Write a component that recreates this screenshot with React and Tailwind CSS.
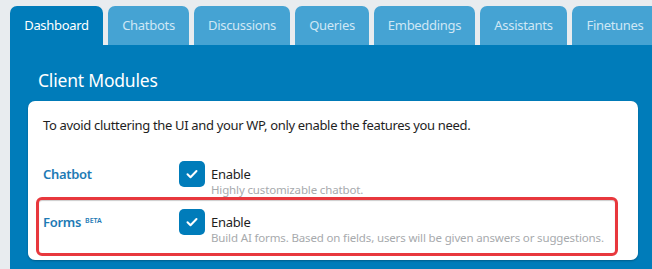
import React from 'react';

const tabs = [
  { label: 'Dashboard', w: 'w-[93px]' },
  { label: 'Chatbots', w: 'w-[81px]' },
  { label: 'Discussions', w: 'w-[96px]' },
  { label: 'Queries', w: 'w-[74px]' },
  { label: 'Embeddings', w: 'w-[101px]' },
  { label: 'Assistants', w: 'w-[87px]' },
  { label: 'Finetunes', w: 'w-[86px]' },
];

const CheckBox = () => (
  <div className="w-[26px] h-[26px] rounded-[5px] bg-[#007cba] flex items-center justify-center shrink-0">
    <svg width="14" height="14" viewBox="0 0 14 14" fill="none">
      <path d="M2.5 7.3l3 3 6-6.3" stroke="#fff" strokeWidth="2" strokeLinecap="round" strokeLinejoin="round" />
    </svg>
  </div>
);

const ModuleRow = ({ label, beta, description }) => (
  <div className="flex items-start">
    <div className="w-[136px] pt-[5px] text-[13px] font-semibold text-[#1d7ab5] leading-[16px] tracking-[-0.3px]">
      {label}
      {beta && (
        <span className="inline-block align-top ml-[4px] mt-[3px] text-[7px] leading-[8px] font-semibold tracking-normal">
          BETA
        </span>
      )}
    </div>
    <CheckBox />
    <div className="ml-[6px] flex flex-col whitespace-nowrap">
      <span className="text-[13px] leading-[18px] text-[#1e1e1e] mt-[4px] tracking-[-0.3px]">Enable</span>
      <span className="text-[11.5px] leading-[14px] text-[#a7aaad] tracking-[-0.15px]">{description}</span>
    </div>
  </div>
);

export default function App() {
  return (
    <div className="w-full h-[269px] overflow-hidden bg-[#e8ecef] pl-[10px] pt-[6px] font-['Noto_Sans',sans-serif]">
      <div className="flex gap-[5px]">
        {tabs.map((t, i) => (
          <div
            key={t.label}
            className={`${t.w} h-[39px] shrink-0 rounded-t-[7px] pt-[1px] flex items-center justify-center whitespace-nowrap text-[13px] tracking-[-0.3px] ${
              i === 0 ? 'bg-[#007cba] text-white' : 'bg-[#45a3d3] text-[#cfe7f5]'
            }`}
          >
            {t.label}
          </div>
        ))}
      </div>
      <div className="bg-[#007cba] h-full pl-[18px] pr-[14px]">
        <h2 className="pt-[23px] pl-[10px] text-[17.5px] leading-[24px] text-white tracking-[-0.2px]">Client Modules</h2>
        <div className="mt-[9px] bg-white rounded-[7px] shadow-[0_1px_2px_rgba(0,0,0,0.25)] pt-[15px] pb-[4px] px-[8px]">
          <p className="pl-[7px] text-[13px] leading-[18px] text-[#1e1e1e] tracking-[-0.33px]">
            To avoid cluttering the UI and your WP, only enable the features you need.
          </p>
          <div className="mt-[27px] pl-[7px]">
            <ModuleRow label="Chatbot" description="Highly customizable chatbot." />
          </div>
          <div className="w-[582px] border-[3px] border-[#e8383d] rounded-[6px] shadow-[inset_0_1px_1px_rgba(0,0,0,0.2)] pt-[9px] pb-[8px] pl-[4px]">
            <ModuleRow
              label="Forms"
              beta
              description="Build AI forms. Based on fields, users will be given answers or suggestions."
            />
          </div>
        </div>
      </div>
    </div>
  );
}
